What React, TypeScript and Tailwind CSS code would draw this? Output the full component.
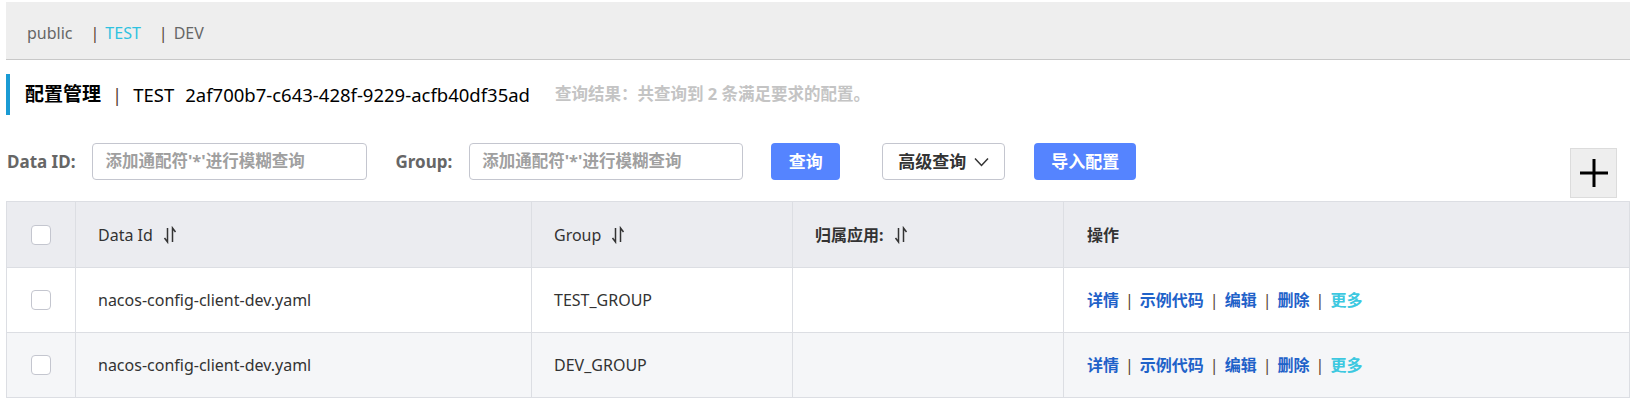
import React from "react"

const rows = [
  { id: "nacos-config-client-dev.yaml", group: "TEST_GROUP", app: "" },
  { id: "nacos-config-client-dev.yaml", group: "DEV_GROUP", app: "" },
]

function SortIcon() {
  return (
    <svg width="14" height="18" viewBox="0 0 14 18" className="ml-[10px] shrink-0">
      <path d="M4.5 2 V16 L1.5 12" fill="none" stroke="#333" strokeWidth="1.5" />
      <path d="M9.5 16 V2 L12.5 6" fill="none" stroke="#333" strokeWidth="1.5" />
    </svg>
  )
}

function Checkbox() {
  return <div className="mx-auto h-[20px] w-[20px] rounded-[4px] border border-[#c4c6cf] bg-white" />
}

function Pipe() {
  return <span className="mx-[6px] font-normal text-[#5a4232]">|</span>
}

export default function App() {
  return (
    <div className="min-h-screen bg-white pl-[6px] pr-[8px] font-['Noto_Sans','Noto_Sans_CJK_SC',sans-serif] text-[16px] text-[#333]">
      {/* namespace tabs */}
      <div className="mt-[2px] flex h-[58px] items-center border-b border-[#c8c8c8] bg-[#eeeeee] pl-[21px] pt-[5px] text-[16px] text-[#666]">
        <span>public</span>
        <span className="ml-[18px] text-[#5a4232]">|</span>
        <span className="ml-[6px] text-[#2ec2e0]">TEST</span>
        <span className="ml-[18px] text-[#5a4232]">|</span>
        <span className="ml-[6px]">DEV</span>
      </div>

      {/* title */}
      <div className="mt-[14px] flex h-[41px] items-center border-l-4 border-[#1a9bd4] pl-[15px] text-[18.5px] text-black">
        <span className="text-[19px] font-bold">配置管理</span>
        <span className="mx-[11px] text-[#5a4232]">|</span>
        <span>TEST</span>
        <span className="ml-[11px]">2af700b7-c643-428f-9229-acfb40df35ad</span>
        <span className="ml-[25px] text-[16.5px] font-bold text-[#c4c4c4]">查询结果：共查询到 2 条满足要求的配置。</span>
      </div>

      {/* search bar */}
      <div className="mt-[28px] flex items-start">
        <div className="flex h-[37px] items-center">
          <span className="ml-[1px] text-[17px] font-bold text-[#666]">Data ID:</span>
          <div className="ml-[17px] flex h-[37px] w-[275px] items-center rounded-[4px] border border-[#c4c6cf] pl-[12px] text-[16.5px] font-bold text-[#a0a0a0]">
            添加通配符'*'进行模糊查询
          </div>
          <span className="ml-[28px] text-[17px] font-bold text-[#666]">Group:</span>
          <div className="ml-[17px] flex h-[37px] w-[274px] items-center rounded-[4px] border border-[#c4c6cf] pl-[12px] text-[16.5px] font-bold text-[#a0a0a0]">
            添加通配符'*'进行模糊查询
          </div>
          <button className="ml-[28px] h-[37px] w-[69px] rounded-[4px] bg-[#5584ff] text-[17px] font-bold text-white">查询</button>
          <button className="ml-[42px] flex h-[37px] w-[123px] items-center justify-center rounded-[4px] border border-[#c4c6cf] bg-white text-[17px] font-bold text-[#333]">
            高级查询
            <svg width="15" height="10" viewBox="0 0 15 10" className="ml-[8px]">
              <path d="M1 1.5 L7.5 8.5 L14 1.5" fill="none" stroke="#333" strokeWidth="1.5" />
            </svg>
          </button>
          <button className="ml-[29px] h-[37px] w-[102px] rounded-[4px] bg-[#5584ff] text-[17px] font-bold text-white">导入配置</button>
        </div>
        <div className="ml-auto mr-[13px] mt-[5px] flex h-[50px] w-[47px] items-center justify-center border border-[#dcdcdc] bg-[#eeeeee]">
          <svg width="28" height="28" viewBox="0 0 28 28">
            <path d="M14 0 V28 M0 14 H28" stroke="#000" strokeWidth="3" />
          </svg>
        </div>
      </div>

      {/* table */}
      <table className="mt-[3px] w-full table-fixed border-collapse border border-[#dcdee3]">
        <colgroup>
          <col className="w-[69px]" />
          <col className="w-[456px]" />
          <col className="w-[261px]" />
          <col className="w-[271px]" />
          <col />
        </colgroup>
        <thead>
          <tr className="h-[66px] bg-[#ebecf0] text-left">
            <th className="border border-[#dcdee3] font-normal">
              <Checkbox />
            </th>
            <th className="border border-[#dcdee3] pl-[22px] font-normal">
              <div className="flex items-center">Data Id<SortIcon /></div>
            </th>
            <th className="border border-[#dcdee3] pl-[22px] font-normal">
              <div className="flex items-center">Group<SortIcon /></div>
            </th>
            <th className="border border-[#dcdee3] pl-[22px] font-bold">
              <div className="flex items-center">归属应用:<SortIcon /></div>
            </th>
            <th className="border border-[#dcdee3] pl-[23px] font-bold">操作</th>
          </tr>
        </thead>
        <tbody>
          {rows.map((r, i) => (
            <tr key={i} className={i % 2 === 1 ? "h-[65px] bg-[#f5f6f8]" : "h-[65px] bg-white"}>
              <td className="border border-[#dcdee3]">
                <Checkbox />
              </td>
              <td className="border border-[#dcdee3] pl-[22px]">{r.id}</td>
              <td className="border border-[#dcdee3] pl-[22px]">{r.group}</td>
              <td className="border border-[#dcdee3] pl-[22px]">{r.app}</td>
              <td className="border border-[#dcdee3] pl-[23px] font-bold text-[#1f62c9]">
                <span>详情</span>
                <Pipe />
                <span>示例代码</span>
                <Pipe />
                <span>编辑</span>
                <Pipe />
                <span>删除</span>
                <Pipe />
                <span className="text-[#3cc8e0]">更多</span>
              </td>
            </tr>
          ))}
        </tbody>
      </table>
    </div>
  )
}
